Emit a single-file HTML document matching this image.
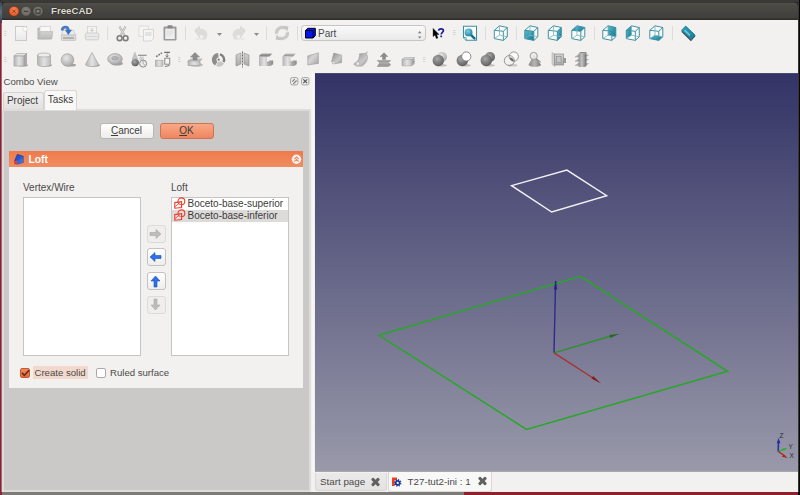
<!DOCTYPE html>
<html><head><meta charset="utf-8">
<style>
*{margin:0;padding:0;box-sizing:border-box}
html,body{width:800px;height:495px;overflow:hidden;background:#2a2a2a;font-family:"Liberation Sans",sans-serif;font-size:10px;color:#3c3c3c}
.abs{position:absolute}
#desk-l{left:0;top:0;width:2px;height:23px;background:linear-gradient(#343330 0,#343330 2px,#3a4a5e 3px,#5f6d7e 12px,#3d4c62 20px,#6b3040 23px)}
#desk-l2{left:0;top:23px;width:2px;height:472px;background:linear-gradient(90deg,#8a2035 0,#8a2035 1px,#a86a72 1px,#a86a72 2px)}
#desk-r{left:798px;top:0;width:2px;height:495px;background:linear-gradient(90deg,#5a5a58 0,#111 1px,#000 2px)}
#desk-b{left:0;top:492px;width:800px;height:3px;background:linear-gradient(90deg,#86233a 0,#86233a 2px,#7c7b78 2px,#7c7b78 464px,#8e1f2c 464px,#8e1f2c 798px,#000 798px)}
#desk-t{left:0;top:0;width:800px;height:2px;background:#3a3935}
#title{left:2px;top:2px;width:796px;height:18px;background:linear-gradient(#383733 0,#383733 1px,#504f4a 1.5px,#4b4a45 3px,#403f3b 16px,#2f2e2b 17px,#2f2e2b 18px);border-radius:5px 5px 0 0}
#title .t{position:absolute;left:49px;top:3px;font-weight:bold;font-size:9.7px;color:#dfdbd2;text-shadow:0 0 1px #111}
.wb{position:absolute;top:5px;width:11px;height:11px;border-radius:50%}
#win{left:2px;top:20px;width:796px;height:472px;background:#f2f1f0}
#view{left:315px;top:73px;width:483px;height:399px;background:linear-gradient(#4a4972 0,#4a4972 1px,#333366 1px,#9999aa 398px,#a9a8b0 398px)}

#dock{left:2px;top:72px;width:308px;height:420px;background:#f2f1f0}
.dbtn{width:9px;height:9px;border:1px solid #b5b4b2;border-radius:2px;background:#f4f4f3}
#pane{left:2px;top:108.5px;width:309px;height:383px;background:#cbc9c7;border:2px solid #dddcda;border-radius:2px}
.tab{font-size:10px;color:#3c3c3c;text-align:center;border:1px solid #d3d2d0;border-bottom:none;border-radius:3px 3px 0 0;background:linear-gradient(#f1f0ef,#e2e1df)}
#tabP{padding-top:1.5px;padding-right:2px}
.tab.sel{background:#f8f8f7;padding-top:3.5px;border-color:#d8d7d5}
#split{left:311px;top:73px;width:4px;height:419px;background:linear-gradient(90deg,#f2f1f0,#f8f8f7 60%,#ecebea)}
#btnCancel,#btnOK{top:123px;width:54px;height:15.5px;border-radius:3px;text-align:center;font-size:10px;line-height:14px}
#btnCancel{left:99.5px;border:1px solid #b9b8b6;background:linear-gradient(#fefefe,#eeedec);color:#3c3c3c}
#btnOK{left:159.5px;border:1px solid #cf7452;background:linear-gradient(#f8a886,#ef8660);color:#3c3c3c}
#tbhead{left:9px;top:150.5px;width:294px;height:16px;background:linear-gradient(#ef7a4a,#f08d62)}
#tbhead span{position:absolute;left:19.5px;top:3.3px;font-weight:bold;font-size:10.3px;color:#fff}
#tbody{left:9px;top:166.5px;width:294px;height:221.5px;background:#f2f1f0}
.lbl{font-size:10px;color:#4a4a4a}
.lbox{background:#fff;border:1px solid #c6c5c3}
.row{position:absolute;left:0;width:116px;height:12px;padding-left:15.5px;font-size:10px;line-height:12px;color:#3c3c3c}
.row.hl{background:#dddbd9}

.abtn{width:19px;height:18px;border:1px solid #c3c2c0;border-radius:3px;background:linear-gradient(#fefefe,#efeeed);padding:0 0 0 1px}
.abtn.dis{border-color:#dcdbd9;background:#efeeed}
.abtn svg{display:block;margin-top:0;margin-left:-1.5px}
#chk1{left:19.5px;top:368px;width:10px;height:9.5px;border-radius:2px;background:linear-gradient(#f08a5e,#e3683a);border:1px solid #c85a30}
#chk1 svg{position:absolute;left:-1px;top:-1px}
#chk1l{left:33px;top:366px;width:55px;height:12.5px;background:#f3d9cd;font-size:9.6px;line-height:14px;padding-left:1.5px;color:#4a4a4a}
#chk2{left:96px;top:368px;width:9.5px;height:9.5px;border-radius:2px;background:#fff;border:1px solid #aaa9a7}
#chk2l{left:110px;top:366px;font-size:9.6px;line-height:14px;color:#4a4a4a}
#tabbar{left:311px;top:472px;width:487px;height:20px;background:#f2f1f0}
.btab{border:1px solid #d9d8d6;border-top:none;border-radius:0 0 3px 3px;font-size:9.8px;color:#4a4a4a}
.btab span{position:absolute;top:3px}
.x{position:absolute;top:5px;width:9px;height:9px}
.x:before,.x:after{content:"";position:absolute;left:3px;top:-0.5px;width:3px;height:10px;background:#626262;border-radius:1px;transform:rotate(45deg)}
.x:after{transform:rotate(-45deg)}
</style></head>
<body>
<div class="abs" id="desk-t"></div>
<div class="abs" id="desk-l"></div><div class="abs" id="desk-l2"></div>
<div class="abs" id="desk-r"></div>
<div class="abs" id="desk-b"></div>
<div class="abs" id="title">
  <svg style="position:absolute;left:0;top:0" width="60" height="18" viewBox="0 0 60 18">
  <defs><radialGradient id="tbR" cx=".5" cy=".4" r=".6"><stop offset="0" stop-color="#f88a5c"/><stop offset=".7" stop-color="#e8602f"/><stop offset="1" stop-color="#c4481e"/></radialGradient>
  <radialGradient id="tbG" cx=".5" cy=".4" r=".6"><stop offset="0" stop-color="#86857f"/><stop offset=".7" stop-color="#6c6b66"/><stop offset="1" stop-color="#55544f"/></radialGradient></defs>
  <circle cx="12" cy="9.3" r="5.2" fill="url(#tbR)" stroke="#3a2a22" stroke-width=".6"/>
  <path d="M10.4 7.7l3.2 3.2M13.6 7.7l-3.2 3.2" stroke="#7a3418" stroke-width=".9"/>
  <circle cx="24" cy="9.3" r="5.2" fill="url(#tbG)" stroke="#383733" stroke-width=".6"/>
  <path d="M21.8 9.3h4.4" stroke="#3a3935" stroke-width="1.2"/>
  <circle cx="36" cy="9.3" r="5.2" fill="url(#tbG)" stroke="#383733" stroke-width=".6"/>
  <rect x="34" y="7.3" width="4" height="4" fill="none" stroke="#3a3935" stroke-width="1"/>
</svg>
  <div class="t">FreeCAD</div>
</div>
<div class="abs" id="win"></div>
<!--TOOLBAR--><svg class="abs" style="left:0;top:0" width="800" height="72" viewBox="0 0 800 72"><defs>
<linearGradient id="gW" x1="0" y1="0" x2="0" y2="1"><stop offset="0" stop-color="#fafafa"/><stop offset="1" stop-color="#e9e9e9"/></linearGradient>
<linearGradient id="gG" x1="0" y1="0" x2="0" y2="1"><stop offset="0" stop-color="#d2d2d2"/><stop offset="1" stop-color="#a9a9a9"/></linearGradient>
<linearGradient id="gGh" x1="0" y1="0" x2="1" y2="0"><stop offset="0" stop-color="#b4b4b4"/><stop offset=".5" stop-color="#e2e2e2"/><stop offset="1" stop-color="#bcbcbc"/></linearGradient>
<linearGradient id="gTop" x1="0" y1="0" x2="0" y2="1"><stop offset="0" stop-color="#a8a8a8"/><stop offset="1" stop-color="#6c6c6c"/></linearGradient>
<linearGradient id="gTopL" x1="0" y1="0" x2="0" y2="1"><stop offset="0" stop-color="#c4c4c4"/><stop offset="1" stop-color="#8a8a8a"/></linearGradient>
<linearGradient id="gG2" x1="0" y1="0" x2="1" y2="0"><stop offset="0" stop-color="#b8b8b8"/><stop offset="1" stop-color="#8a8a8a"/></linearGradient>
<linearGradient id="gRuled" x1="0" y1="0" x2="1" y2="1"><stop offset="0" stop-color="#9a9a9a"/><stop offset=".4" stop-color="#d6d6d6"/><stop offset="1" stop-color="#a4a4a4"/></linearGradient>
<linearGradient id="gLoft" x1="0" y1="0" x2="1" y2="1"><stop offset="0" stop-color="#8a8a8a"/><stop offset=".6" stop-color="#c8c8c8"/><stop offset="1" stop-color="#a0a0a0"/></linearGradient>
<linearGradient id="gOpen" x1="0" y1="0" x2="0" y2="1"><stop offset="0" stop-color="#d2d2d2"/><stop offset="1" stop-color="#bababa"/></linearGradient>
<linearGradient id="gMeas" x1="0" y1="0" x2="1" y2="1"><stop offset="0" stop-color="#2aa0c0"/><stop offset="1" stop-color="#1a7a94"/></linearGradient>
<linearGradient id="gSect" x1="0" y1="0" x2="1" y2="0"><stop offset="0" stop-color="#8a8a8a"/><stop offset=".5" stop-color="#b4b4b4"/><stop offset="1" stop-color="#7a7a7a"/></linearGradient>
<linearGradient id="gComp" x1="0" y1="0" x2="1" y2="0"><stop offset="0" stop-color="#8c8c8c"/><stop offset=".5" stop-color="#c2c2c2"/><stop offset="1" stop-color="#8a8a8a"/></linearGradient>
<linearGradient id="gT" x1="0" y1="0" x2="1" y2="1"><stop offset="0" stop-color="#58bcd4"/><stop offset="1" stop-color="#137a94"/></linearGradient>
<radialGradient id="gS" cx=".4" cy=".35" r=".7"><stop offset="0" stop-color="#e4e4e4"/><stop offset="1" stop-color="#9a9a9a"/></radialGradient>
<radialGradient id="gSd" cx=".4" cy=".35" r=".7"><stop offset="0" stop-color="#a8a8a8"/><stop offset="1" stop-color="#5a5a5a"/></radialGradient>
<radialGradient id="gSl" cx=".4" cy=".35" r=".7"><stop offset="0" stop-color="#e8e8e8"/><stop offset="1" stop-color="#a6a6a6"/></radialGradient>
<radialGradient id="gMag" cx=".4" cy=".35" r=".7"><stop offset="0" stop-color="#7fd0e6"/><stop offset="1" stop-color="#1a7fa0"/></radialGradient>
<radialGradient id="gR" cx=".5" cy=".5" r=".5"><stop offset="0" stop-color="#f78055"/><stop offset=".75" stop-color="#e55a2c"/><stop offset="1" stop-color="#b54420"/></radialGradient>
</defs><rect x="301.5" y="25.5" width="124" height="15" rx="3" fill="url(#gW)" stroke="#c6c5c3"/>
<g transform="translate(304.5,27)"><path d="M1 3.5L3.2 1.3H10.8V8.7L8.6 11H1z" fill="#0014f0" stroke="#000" stroke-width="1"/><path d="M1.2 3.5H8.6V11" fill="none" stroke="#000" stroke-width=".8"/></g>
<text x="318" y="36.6" font-family="Liberation Sans" font-size="10" fill="#4a4a4a">Part</text>
<path d="M418 33.2h3.4l-1.7-2.2zM418 36.4h3.4l-1.7 2.2z" fill="#777"/><g transform="translate(4,31)" stroke="#d6d5d3" stroke-width="1"><path d="M0 0.5h2.5M0 2.5h2.5M0 4.5h2.5"/></g><g transform="translate(13,25)"><rect x="2.5" y="1.5" width="11" height="14" fill="url(#gW)" stroke="#c9c9c9"/><circle cx="12" cy="4" r="2.2" fill="#fff" stroke="#d6d6d6" stroke-width=".8"/></g><g transform="translate(37,25)"><path d="M0.8 3h3l.8 .8h8.4v10.3H0.8z" fill="#c2c2c2" stroke="#b0b0b0" stroke-width=".6"/><rect x="3" y="1.3" width="10.6" height="8" fill="#f7f7f7" stroke="#c6c6c6" stroke-width=".6"/><path d="M3.5 6.6H15.8L14.8 14H1.2z" fill="url(#gOpen)" stroke="#b2b2b2" stroke-width=".6"/></g><g transform="translate(60,25)"><path d="M2.9 5.3h10.5l2.4 4.8H1.4z" fill="#ececec" stroke="#bdbdbd" stroke-width=".6"/><rect x="1.4" y="10.1" width="14.4" height="5.3" rx=".8" fill="#dcdcdc" stroke="#b4b4b4" stroke-width=".6"/><rect x="3" y="12.2" width="11" height="1.6" fill="#a9a9a9"/><path d="M2.2 5.4C2.2 1.8 7.8 0.4 8.4 5.4" fill="none" stroke="#4a7cc4" stroke-width="2.8"/><path d="M4.9 4.7H12L8.3 10.1z" fill="#3d70be"/></g><g transform="translate(84,25)"><rect x="3.5" y="1.5" width="9" height="7" fill="#f2f2f2" stroke="#d2d2d2" stroke-width=".8"/><path d="M8 3v3M6.5 5l1.5 1.5 1.5-1.5" stroke="#c4c4c4" fill="none"/><rect x="1.3" y="8" width="13.5" height="6.8" rx="1.5" fill="#e9e9e9" stroke="#c8c8c8" stroke-width=".8"/><path d="M2.5 11.5h11" stroke="#d4d4d4"/></g><path d="M107.5 26V40.5" stroke="#dddcda" stroke-width="1"/><g transform="translate(115,25)"><path d="M4.5 1.5L9.8 11M10.5 1.5L5.2 11" stroke="#a9a9a9" stroke-width="2"/><path d="M4.5 1.5L9.8 11M10.5 1.5L5.2 11" stroke="#e4e4e4" stroke-width=".9"/><circle cx="4.6" cy="13.2" r="2.4" fill="none" stroke="#7e7e7e" stroke-width="1.6"/><circle cx="10.6" cy="13.2" r="2.4" fill="none" stroke="#7e7e7e" stroke-width="1.6"/></g><g transform="translate(138,25)"><rect x="1" y="1" width="9.5" height="10.5" fill="#f4f4f4" stroke="#dcdcdc" stroke-width=".9"/><path d="M5.5 4.5h10v9l-2.5 2.5h-7.5z" fill="#f5f5f5" stroke="#d2d2d2" stroke-width=".9"/><rect x="7" y="7" width="6.5" height="4" fill="#e2e2e2"/></g><g transform="translate(162,25)"><rect x="1.5" y="1.5" width="13" height="14" rx="1" fill="#9b9b9b"/><rect x="3.2" y="3.6" width="9.6" height="10.4" fill="#eeeeee"/><path d="M4.5 6h7M4.5 8h7M4.5 10h5" stroke="#d6d6d6" stroke-width=".8"/><rect x="5.5" y="0.3" width="5" height="3" rx=".8" fill="#858585"/></g><path d="M185.5 26V40.5" stroke="#dddcda" stroke-width="1"/><g transform="translate(193,25)"><ellipse cx="8" cy="13.8" rx="6" ry="1.5" fill="#e9e8e7"/><path d="M1.5 5.5L6.5 1v3c4.5 0 7.5 2 7.5 5.8 0 2.6-1.8 4-3.8 4.5 1.3-1.3 1.7-4.5-3.7-4.8v3.2z" fill="#dcdcdc" stroke="#d2d2d2" stroke-width=".5"/></g><path d="M217 33h5l-2.5 3z" fill="#8c8c8c"/><g transform="translate(231,25)"><g transform="translate(16,0) scale(-1,1)"><ellipse cx="8" cy="13.8" rx="6" ry="1.5" fill="#e9e8e7"/><path d="M1.5 5.5L6.5 1v3c4.5 0 7.5 2 7.5 5.8 0 2.6-1.8 4-3.8 4.5 1.3-1.3 1.7-4.5-3.7-4.8v3.2z" fill="#dcdcdc" stroke="#d2d2d2" stroke-width=".5"/></g></g><path d="M254 33h5l-2.5 3z" fill="#8c8c8c"/><path d="M266.5 26V40.5" stroke="#dddcda" stroke-width="1"/><g transform="translate(274,25)"><path d="M2.6 8.8A5.4 5.4 0 0 1 11.2 3.6" fill="none" stroke="#c9c9c9" stroke-width="3.2"/><path d="M9.2 0.8l5.2 .6-1.2 5.4z" fill="#c4c4c4"/><path d="M13.4 7.2A5.4 5.4 0 0 1 4.8 12.4" fill="none" stroke="#c9c9c9" stroke-width="3.2"/><path d="M6.8 15.2l-5.2-.6 1.2-5.4z" fill="#c4c4c4"/></g><path d="M297.5 26V40.5" stroke="#dddcda" stroke-width="1"/><g transform="translate(431,27)"><path d="M2.1 1.4V9.6L4 7.9 5.4 11.6 6.9 11 5.6 7.4H8z" fill="#000" stroke="#000" stroke-width=".4" stroke-linejoin="round"/><path d="M7.6 3.6C7.8 1.4 12.4 1.2 12.4 3.6 12.4 5.4 10.2 5.4 10.2 7.6" fill="none" stroke="#1c1c9c" stroke-width="1.7"/><rect x="9.3" y="8.6" width="1.8" height="1.6" fill="#1c1c9c"/></g><g transform="translate(453,30)" stroke="#d6d5d3" stroke-width="1"><path d="M0 0.5h2.5M0 2.5h2.5M0 4.5h2.5"/></g><g transform="translate(462,25)"><path d="M1.5 1.2h13v14.1h-10.3l-2.7-2.7z" fill="#fdfefe" stroke="#3f8f9b" stroke-width="1.1"/><path d="M1.5 12.6h2.7v2.7" fill="#e6f0f2" stroke="#3f8f9b" stroke-width=".8"/><path d="M9.2 10.2l3.2 3.2" stroke="#167186" stroke-width="2.6" stroke-linecap="round"/><circle cx="6.6" cy="7.4" r="3.9" fill="url(#gMag)"/></g><path d="M485.5 26V40.5" stroke="#dddcda" stroke-width="1"/><g transform="translate(493.3,25)"><path d="M1 5.3 L10 6.3 L10 15.4 L1 13.6Z" fill="#fbfdfd"/><path d="M1 5.3 L6.2 0.8 L14 2.5 L10 6.3Z" fill="#f6fafb"/><path d="M10 6.3 L14 2.5 L14 11.8 L10 15.4Z" fill="#f3f8f9"/><path d="M1 5.3L10 6.3M10 6.3L10 15.4M10 15.4L1 13.6M1 13.6L1 5.3M6.2 0.8L14 2.5M14 2.5L14 11.8M1 5.3L6.2 0.8M10 6.3L14 2.5M10 15.4L14 11.8" stroke="#3a8c99" stroke-width=".95" fill="none" stroke-linejoin="round"/><path d="M14 11.8L6.2 10.2M6.2 10.2L6.2 0.8M1 13.6L6.2 10.2" stroke="#7ab4bd" stroke-width=".8" fill="none"/></g><path d="M516.5 26V40.5" stroke="#dddcda" stroke-width="1"/><g transform="translate(523.8,25)"><path d="M1 5.3 L10 6.3 L10 15.4 L1 13.6Z" fill="#fbfdfd"/><path d="M1 5.3 L6.2 0.8 L14 2.5 L10 6.3Z" fill="#f6fafb"/><path d="M10 6.3 L14 2.5 L14 11.8 L10 15.4Z" fill="#f3f8f9"/><path d="M1 5.3 L10 6.3 L10 15.4 L1 13.6Z" fill="url(#gT)"/><path d="M1 5.3L10 6.3M10 6.3L10 15.4M10 15.4L1 13.6M1 13.6L1 5.3M6.2 0.8L14 2.5M14 2.5L14 11.8M1 5.3L6.2 0.8M10 6.3L14 2.5M10 15.4L14 11.8" stroke="#3a8c99" stroke-width=".95" fill="none" stroke-linejoin="round"/><path d="M14 11.8L6.2 10.2M6.2 10.2L6.2 0.8M1 13.6L6.2 10.2" stroke="#7ab4bd" stroke-width=".8" fill="none"/></g><g transform="translate(547.3,25)"><path d="M1 5.3 L10 6.3 L10 15.4 L1 13.6Z" fill="#fbfdfd"/><path d="M1 5.3 L6.2 0.8 L14 2.5 L10 6.3Z" fill="#f6fafb"/><path d="M10 6.3 L14 2.5 L14 11.8 L10 15.4Z" fill="#f3f8f9"/><path d="M10 6.3 L14 2.5 L14 11.8 L10 15.4Z" fill="url(#gT)"/><path d="M1 5.3L10 6.3M10 6.3L10 15.4M10 15.4L1 13.6M1 13.6L1 5.3M6.2 0.8L14 2.5M14 2.5L14 11.8M1 5.3L6.2 0.8M10 6.3L14 2.5M10 15.4L14 11.8" stroke="#3a8c99" stroke-width=".95" fill="none" stroke-linejoin="round"/><path d="M14 11.8L6.2 10.2M6.2 10.2L6.2 0.8M1 13.6L6.2 10.2" stroke="#7ab4bd" stroke-width=".8" fill="none"/></g><g transform="translate(570.8,25)"><path d="M1 5.3 L10 6.3 L10 15.4 L1 13.6Z" fill="#fbfdfd"/><path d="M1 5.3 L6.2 0.8 L14 2.5 L10 6.3Z" fill="#f6fafb"/><path d="M10 6.3 L14 2.5 L14 11.8 L10 15.4Z" fill="#f3f8f9"/><path d="M1 5.3 L6.2 0.8 L14 2.5 L10 6.3Z" fill="url(#gT)"/><path d="M1 5.3L10 6.3M10 6.3L10 15.4M10 15.4L1 13.6M1 13.6L1 5.3M6.2 0.8L14 2.5M14 2.5L14 11.8M1 5.3L6.2 0.8M10 6.3L14 2.5M10 15.4L14 11.8" stroke="#3a8c99" stroke-width=".95" fill="none" stroke-linejoin="round"/><path d="M14 11.8L6.2 10.2M6.2 10.2L6.2 0.8M1 13.6L6.2 10.2" stroke="#7ab4bd" stroke-width=".8" fill="none"/></g><path d="M594.5 26V40.5" stroke="#dddcda" stroke-width="1"/><g transform="translate(601.8,25)"><path d="M1 5.3 L10 6.3 L10 15.4 L1 13.6Z" fill="#fbfdfd"/><path d="M1 5.3 L6.2 0.8 L14 2.5 L10 6.3Z" fill="#f6fafb"/><path d="M10 6.3 L14 2.5 L14 11.8 L10 15.4Z" fill="#f3f8f9"/><path d="M6.2 0.8 L14 2.5 L14 11.8 L6.2 10.2Z" fill="url(#gT)"/><path d="M1 5.3L10 6.3M10 6.3L10 15.4M10 15.4L1 13.6M1 13.6L1 5.3M6.2 0.8L14 2.5M14 2.5L14 11.8M1 5.3L6.2 0.8M10 6.3L14 2.5M10 15.4L14 11.8" stroke="#3a8c99" stroke-width=".95" fill="none" stroke-linejoin="round"/><path d="M14 11.8L6.2 10.2M6.2 10.2L6.2 0.8M1 13.6L6.2 10.2" stroke="#7ab4bd" stroke-width=".8" fill="none"/></g><g transform="translate(625.3,25)"><path d="M1 5.3 L10 6.3 L10 15.4 L1 13.6Z" fill="#fbfdfd"/><path d="M1 5.3 L6.2 0.8 L14 2.5 L10 6.3Z" fill="#f6fafb"/><path d="M10 6.3 L14 2.5 L14 11.8 L10 15.4Z" fill="#f3f8f9"/><path d="M1 5.3 L6.2 0.8 L6.2 10.2 L1 13.6Z" fill="url(#gT)"/><path d="M1 5.3L10 6.3M10 6.3L10 15.4M10 15.4L1 13.6M1 13.6L1 5.3M6.2 0.8L14 2.5M14 2.5L14 11.8M1 5.3L6.2 0.8M10 6.3L14 2.5M10 15.4L14 11.8" stroke="#3a8c99" stroke-width=".95" fill="none" stroke-linejoin="round"/><path d="M14 11.8L6.2 10.2M6.2 10.2L6.2 0.8M1 13.6L6.2 10.2" stroke="#7ab4bd" stroke-width=".8" fill="none"/></g><g transform="translate(648.8,25)"><path d="M1 5.3 L10 6.3 L10 15.4 L1 13.6Z" fill="#fbfdfd"/><path d="M1 5.3 L6.2 0.8 L14 2.5 L10 6.3Z" fill="#f6fafb"/><path d="M10 6.3 L14 2.5 L14 11.8 L10 15.4Z" fill="#f3f8f9"/><path d="M1 13.6 L6.2 10.2 L14 11.8 L10 15.4Z" fill="url(#gT)"/><path d="M1 5.3L10 6.3M10 6.3L10 15.4M10 15.4L1 13.6M1 13.6L1 5.3M6.2 0.8L14 2.5M14 2.5L14 11.8M1 5.3L6.2 0.8M10 6.3L14 2.5M10 15.4L14 11.8" stroke="#3a8c99" stroke-width=".95" fill="none" stroke-linejoin="round"/><path d="M14 11.8L6.2 10.2M6.2 10.2L6.2 0.8M1 13.6L6.2 10.2" stroke="#7ab4bd" stroke-width=".8" fill="none"/></g><path d="M672.5 26V40.5" stroke="#dddcda" stroke-width="1"/><g transform="translate(680.5,25)"><path d="M1.1 5.3L10.5 14.6V16.2L1.1 7z" fill="#3a3e40"/><path d="M1.1 5.3L5.2 1 14.6 10.1 10.5 14.6z" fill="url(#gMeas)" stroke="#116a80" stroke-width=".7"/><path d="M4 5l5.5 5.3" stroke="#8fe0f5" stroke-width="1.6" opacity=".7"/><path d="M10.5 14.6L14.6 10.1V11.6L10.5 16.2z" fill="#1a5664"/></g><g transform="translate(4,57)" stroke="#d6d5d3" stroke-width="1"><path d="M0 0.5h2.5M0 2.5h2.5M0 4.5h2.5"/></g><g transform="translate(12,51)"><ellipse cx="11" cy="14.2" rx="5" ry="1.3" fill="#8e8e8e" opacity=".8"/><path d="M2 5l3-2.5h9.5L12 5z" fill="#e6e6e6" stroke="#a8a8a8" stroke-width=".7"/><path d="M12 5l2.5-2.5v10L12 15z" fill="#a9a9a9" stroke="#9a9a9a" stroke-width=".7"/><rect x="2" y="5" width="10" height="10" fill="url(#gGh)" stroke="#a4a4a4" stroke-width=".7"/></g><g transform="translate(36,51)"><ellipse cx="11" cy="14.2" rx="5" ry="1.3" fill="#8e8e8e" opacity=".8"/><path d="M1.5 4v9.5a6.5 2 0 0 0 13 0V4z" fill="url(#gGh)" stroke="#a4a4a4" stroke-width=".7"/><ellipse cx="8" cy="4" rx="6.5" ry="2" fill="#ececec" stroke="#a8a8a8" stroke-width=".7"/></g><g transform="translate(60,51)"><ellipse cx="11" cy="14" rx="5" ry="1.5" fill="#8e8e8e" opacity=".8"/><circle cx="7.5" cy="9" r="6.3" fill="url(#gSl)" stroke="#a2a2a2" stroke-width=".7"/></g><g transform="translate(84,51)"><ellipse cx="11" cy="14.3" rx="5" ry="1.4" fill="#8e8e8e" opacity=".8"/><path d="M8 1.5L1.5 13.5a6.5 2 0 0 0 13 0z" fill="url(#gGh)" stroke="#a4a4a4" stroke-width=".7"/></g><g transform="translate(107,51)"><ellipse cx="10" cy="12.5" rx="6" ry="2" fill="#8e8e8e" opacity=".8"/><ellipse cx="8" cy="8" rx="7.3" ry="5.4" fill="url(#gSl)" stroke="#9e9e9e" stroke-width=".7"/><ellipse cx="8" cy="7.2" rx="3.3" ry="1.8" fill="#b3b3b3" stroke="#999" stroke-width=".6"/></g><g transform="translate(131,51)"><path d="M3.9 1.2L1.2 8.2h5.4z" fill="#c4c4c4" stroke="#adadad" stroke-width=".5"/><path d="M7 4.3H15.7" stroke="#8f8f8f" stroke-width="1.2"/><rect x="8.3" y="5.6" width="4.5" height="3.4" fill="#cfcfcf"/><circle cx="4.2" cy="11.6" r="3.7" fill="url(#gSd)"/><circle cx="12.1" cy="12.6" r="3.5" fill="#ededed" stroke="#8a8a8a" stroke-width="1"/><path d="M12.1 9.8v2.8l2 1.8" stroke="#9a9a9a" fill="none" stroke-width=".8"/></g><g transform="translate(154.5,51)"><rect x="0.8" y="9.2" width="7.7" height="6" fill="url(#gGh)" stroke="#a8a8a8" stroke-width=".6"/><path d="M1.7 5.6L7.4 1.9" stroke="#6a6a6a" stroke-width="1.6" stroke-dasharray="1.6 1.1"/><path d="M9.7 1.4H15.5" stroke="#6f6f6f" stroke-width="1.3"/><path d="M12.6 2.5v3.2M11.2 4.6l1.4 1.5 1.4-1.5" stroke="#7a7a7a" fill="none" stroke-width="1"/><rect x="10.3" y="7.2" width="4.9" height="6" fill="#f6f6f6" stroke="#8a8a8a" stroke-width="1"/><path d="M10.5 15.6l4.5-1.2" stroke="#7a7a7a" stroke-width="1"/></g><g transform="translate(178,57)" stroke="#d6d5d3" stroke-width="1"><path d="M0 0.5h2.5M0 2.5h2.5M0 4.5h2.5"/></g><g transform="translate(187,51)"><ellipse cx="9" cy="13.8" rx="7" ry="2" fill="#9a9a9a" opacity=".6"/><path d="M1 10l3-2h11l-2 2z" fill="#d0d0d0" stroke="#9e9e9e" stroke-width=".6"/><rect x="1" y="10" width="12" height="4.5" fill="url(#gGh)" stroke="#9e9e9e" stroke-width=".6"/><path d="M8 1.5L3.5 6h2.5v3h4V6h2.5z" fill="#8e8e8e" stroke="#7a7a7a" stroke-width=".5"/></g><g transform="translate(211,51)"><path d="M7.7 8.7L4.10 14.47A6.8 6.8 0 0 1 7.11 1.93Z" fill="#8c8c8c"/><path d="M7.7 8.7L13.27 12.60A6.8 6.8 0 0 1 5.15 15.00Z" fill="#c6c6c6"/><path d="M8.64 4.61L9.18 2.27A6.6 6.6 0 0 1 13.68 11.49L11.51 10.47A4.2 4.2 0 0 0 8.64 4.61Z" fill="#7e7e7e"/><circle cx="7.7" cy="8.7" r="2.3" fill="#f2f1f0"/><circle cx="7.7" cy="8.7" r="1.1" fill="#777"/></g><g transform="translate(234.5,51)"><path d="M1.5 4l5-2v11l-5 2z" fill="url(#gG)" stroke="#8c8c8c" stroke-width=".6"/><path d="M9.5 2l5 2v11l-5-2z" fill="url(#gG)" stroke="#8c8c8c" stroke-width=".6"/><path d="M8 0.5v16" stroke="#666" stroke-width="1" stroke-dasharray="2 1"/></g><g transform="translate(258,51)"><path d="M1 5.5C1.5 3.5 3 2.5 5 2.5H14.5L11.5 5.5H9.5C9 5.5 9 5.5 9 6.5" fill="url(#gTop)"/><path d="M1 5.5H9V9.5C9 10.5 10 11 11 11V15H1z" fill="url(#gGh)"/><path d="M9 11.5L11.5 9.5H15.2V13.2L12.5 15H9z" fill="url(#gG2)"/><path d="M9 11.5H12.5V15" fill="none" stroke="#9a9a9a" stroke-width=".5"/></g><g transform="translate(281.5,51)"><path d="M1 5.5L4 2.5H14.5L11.5 5.5z" fill="url(#gTopL)"/><path d="M1 5.5H9V9L11 11V15H1z" fill="url(#gGh)"/><path d="M9 11.5L11.5 9.5H15.2V13.2L12.5 15H9z" fill="url(#gG2)"/><path d="M9 11.5H12.5V15" fill="none" stroke="#a4a4a4" stroke-width=".5"/></g><g transform="translate(306.5,51)"><path d="M1.3 4.9L11.9 1.8V12.4L1.3 14z" fill="url(#gRuled)" stroke="#8f8f8f" stroke-width=".5"/></g><g transform="translate(330,51)"><path d="M3.75 2.1L11.6 4V11.8L3 13 1.6 10.25z" fill="url(#gLoft)" stroke="#8a8a8a" stroke-width=".4"/><rect x="2.2" y="10.3" width="2.3" height="2.4" fill="#f4f4f4" stroke="#9a9a9a" stroke-width=".4"/></g><g transform="translate(352.5,51)"><path d="M7 2.8L13.8 2.2C15 4 15.3 6.5 14.8 8.5C13.8 11.5 11.5 14.5 9 15.2H4L1 13.2L4.5 10.5C6.5 8.5 7.2 5.5 7 2.8z" fill="url(#gLoft)" stroke="#8e8e8e" stroke-width=".4"/><path d="M13.8 2.2L15 0.6" stroke="#888" stroke-width=".8"/><path d="M3.5 11.5l2.8-.8.8 3-2.8.8z" fill="#eee" stroke="#999" stroke-width=".4"/></g><g transform="translate(376,51)"><path d="M8 1.8L4.2 5.5h2.3v3h3v-3h2.3z" fill="#8a8a8a" stroke="#777" stroke-width=".4"/><path d="M1.2 9.5h13.5l-2 2H3.2z" fill="#a0a0a0" stroke="#8a8a8a" stroke-width=".5"/><path d="M3.2 12.5h10.5l1 1.5-2.5 1.5H1.2z" fill="#9c9c9c" stroke="#8a8a8a" stroke-width=".5"/></g><g transform="translate(400,51)"><path d="M2 8.3l2.5-1.8h10l-2.5 1.8z" fill="#dcdcdc" stroke="#a0a0a0" stroke-width=".5"/><path d="M2 8.3h10v6.5H2z" fill="url(#gGh)" stroke="#9a9a9a" stroke-width=".5"/><path d="M12 8.3l2.5-1.8v6.5L12 14.8z" fill="#a6a6a6"/><path d="M12.5 11.5l2.7-1" stroke="#999" stroke-width=".8"/></g><g transform="translate(423,57)" stroke="#d6d5d3" stroke-width="1"><path d="M0 0.5h2.5M0 2.5h2.5M0 4.5h2.5"/></g><g transform="translate(432,51)"><circle cx="10" cy="6" r="5" fill="url(#gSl)"/><ellipse cx="9" cy="14.3" rx="6" ry="1.3" fill="#bdbdbd"/><circle cx="6.3" cy="9.5" r="5.7" fill="url(#gSd)"/></g><g transform="translate(456,51)"><ellipse cx="9" cy="14.3" rx="6" ry="1.3" fill="#bdbdbd"/><circle cx="6.3" cy="9.5" r="5.7" fill="url(#gSd)"/><circle cx="10.3" cy="5.5" r="4.6" fill="#fff" stroke="#7a7a7a" stroke-width=".9"/></g><g transform="translate(480,51)"><ellipse cx="9" cy="14.3" rx="6" ry="1.3" fill="#bdbdbd"/><circle cx="10" cy="6" r="5" fill="url(#gSd)"/><circle cx="6.3" cy="9.5" r="5.7" fill="url(#gSd)"/></g><g transform="translate(503.5,51)"><ellipse cx="9" cy="14.3" rx="5" ry="1.2" fill="#c8c8c8"/><circle cx="10.3" cy="5.5" r="4.6" fill="#fafafa" stroke="#8a8a8a" stroke-width=".9"/><circle cx="5.8" cy="9.6" r="5" fill="none" stroke="#8a8a8a" stroke-width=".9"/><path d="M6.2 6.3a4.6 4.6 0 0 0 4.3 4.2 5 5 0 0 0-4.3-4.2z" fill="#6a6a6a"/></g><g transform="translate(527.5,51)"><path d="M6.5 3.5L1 13.8a6 1.8 0 0 0 12.5 0z" fill="url(#gSect)"/><circle cx="6.2" cy="5" r="3.6" fill="#ececec" fill-opacity=".8" stroke="#9a9a9a" stroke-width="1"/><path d="M8.8 7.6l4.2 3.6" stroke="#8a8a8a" stroke-width="1.1"/></g><g transform="translate(550.5,51)"><path d="M1.5 1.5l3 2v12l-3-2z" fill="#cfcfcf" stroke="#aaa" stroke-width=".5"/><rect x="4" y="3" width="9" height="11" fill="url(#gG)" stroke="#8a8a8a" stroke-width=".7"/><rect x="6" y="5.5" width="4.5" height="6" fill="#c6c6c6" stroke="#8a8a8a" stroke-width=".6"/><path d="M13 7h2.5v5H13" fill="#999"/></g><g transform="translate(574,51)"><path d="M1 6l3-2h10.5l-3 2z" fill="#b0b0b0" stroke="#929292" stroke-width=".4"/><path d="M1 10.3l3-2h10.5l-3 2z" fill="#b0b0b0" stroke="#929292" stroke-width=".4"/><path d="M1 14.6l3-2h10.5l-3 2z" fill="#b0b0b0" stroke="#929292" stroke-width=".4"/><rect x="4.5" y="2.5" width="6.5" height="13.5" fill="url(#gComp)" opacity=".92"/><path d="M4.5 2.5l2-1.5h6l-1.5 1.5z" fill="#8a8a8a"/><path d="M11 2.5l1.5-1.5v13.5L11 16z" fill="#7e7e7e"/></g></svg><!--/TOOLBAR-->

<div class="abs" id="dock">
  <div class="abs" style="left:1.5px;top:3.5px;font-size:9.6px;color:#4c4c4c">Combo View</div>
  <svg class="abs" style="left:286px;top:3px" width="26" height="14" viewBox="0 0 26 14">
    <rect x="2.6" y="2.6" width="7.3" height="7.3" rx="1.6" fill="#efefee" stroke="#a3a3a3" stroke-width="1"/>
    <path d="M4.3 6.6l2.4-2.4M5.3 8.8l3.3-3.3" stroke="#7a7a7a" stroke-width="1.1"/>
    <rect x="13.6" y="2.6" width="7.3" height="7.3" rx="1.6" fill="#efefee" stroke="#a3a3a3" stroke-width="1"/>
    <path d="M15.3 4.3l3.9 3.9M19.2 4.3l-3.9 3.9" stroke="#555" stroke-width="1.2"/>
  </svg>
</div>
<div class="abs" id="pane"></div>
<div class="abs tab" id="tabP" style="left:3px;top:92px;width:41px;height:17px;">Project</div>
<div class="abs tab sel" id="tabT" style="left:44px;top:89.5px;width:33px;height:20px;">Tasks</div>
<div class="abs" id="split"></div>
<div class="abs" id="btnCancel"><span><u>C</u>ancel</span></div>
<div class="abs" id="btnOK"><span><u>O</u>K</span></div>
<div class="abs" id="tbhead"><svg class="abs" style="left:4px;top:2px" width="12" height="12" viewBox="0 0 12 12"><defs><linearGradient id="lfG" x1="0" y1="0" x2="1" y2="1"><stop offset="0" stop-color="#1b3fb8"/><stop offset=".5" stop-color="#2a56d0"/><stop offset="1" stop-color="#5a9ae8"/></linearGradient></defs><path d="M4.3 1.3L10.3 3.3V9.5L3.9 11.3 1.7 7.4z" fill="url(#lfG)" stroke="#1a2f8a" stroke-width=".5"/><path d="M3.9 11.3V7.5" stroke="#7fb0f0" stroke-width=".6"/><rect x="1.2" y="8" width="2.8" height="3.3" fill="#e83a20"/></svg><span>Loft</span>
  <svg class="abs" style="left:281.5px;top:3.5px" width="11" height="11" viewBox="0 0 11 11"><circle cx="5.5" cy="5.2" r="4.7" fill="#f6f2f0"/><path d="M3.2 5.2L5.5 3l2.3 2.2M3.2 7.6L5.5 5.4l2.3 2.2" fill="none" stroke="#ef8a60" stroke-width="1.1"/></svg></div>
<div class="abs" id="tbody">
  <div class="abs lbl" style="left:14px;top:15px">Vertex/Wire</div>
  <div class="abs lbl" style="left:162px;top:15px">Loft</div>
  <div class="abs lbox" style="left:14px;top:30px;width:118px;height:159px"></div>
  <div class="abs lbox" style="left:162px;top:30px;width:118px;height:159px">
    <div class="row" style="top:0px"><svg class="abs" style="left:1px;top:-1px" width="13" height="12" viewBox="0 0 13 12"><circle cx="8.4" cy="4.3" r="3.4" fill="none" stroke="#f23a28" stroke-width="1.1"/><path d="M1.8 5.6L8.6 4.6V10.6L1.8 11.2z" fill="#fff" fill-opacity=".3" stroke="#f23a28" stroke-width="1.1"/><path d="M2.2 9.5l4.6-3.8" stroke="#e83424" stroke-width=".8"/></svg>Boceto-base-superior</div>
    <div class="row hl" style="top:12px"><svg class="abs" style="left:1px;top:-1px" width="13" height="12" viewBox="0 0 13 12"><circle cx="8.4" cy="4.3" r="3.4" fill="none" stroke="#f23a28" stroke-width="1.1"/><path d="M1.8 5.6L8.6 4.6V10.6L1.8 11.2z" fill="#fff" fill-opacity=".3" stroke="#f23a28" stroke-width="1.1"/><path d="M2.2 9.5l4.6-3.8" stroke="#e83424" stroke-width=".8"/></svg>Boceto-base-inferior</div>
  </div>
</div>

<div class="abs" id="view"></div>

<div class="abs abtn dis" style="left:146.5px;top:224.5px"><svg width="17" height="16" viewBox="0 0 17 16"><path d="M3 6.5h6v-3l5 4.5-5 4.5v-3H3z" fill="#bdbcbb" stroke="#a9a8a6" stroke-width=".6"/></svg></div>
<div class="abs abtn" style="left:146.5px;top:248px"><svg width="17" height="16" viewBox="0 0 17 16"><path d="M14 6.5H8v-3L3 8l5 4.5v-3h6z" fill="#2f6fe8" stroke="#1d4fb8" stroke-width=".6"/></svg></div>
<div class="abs abtn" style="left:146.5px;top:272px"><svg width="17" height="16" viewBox="0 0 17 16"><path d="M7 14V8H4l4.5-5 4.5 5h-3v6z" fill="#2f6fe8" stroke="#1d4fb8" stroke-width=".6"/></svg></div>
<div class="abs abtn dis" style="left:146.5px;top:295.5px"><svg width="17" height="16" viewBox="0 0 17 16"><path d="M7 2v6H4l4.5 5 4.5-5h-3V2z" fill="#bdbcbb" stroke="#a9a8a6" stroke-width=".6"/></svg></div>
<div class="abs" id="chk1"><svg width="10" height="10" viewBox="0 0 10 10"><path d="M2 4.8l2.3 2.6L9 2.2" fill="none" stroke="#5a2a1a" stroke-width="1.5"/></svg></div>
<div class="abs" id="chk1l">Create solid</div>
<div class="abs" id="chk2"></div>
<div class="abs" id="chk2l">Ruled surface</div>

<svg class="abs" style="left:0;top:0" width="800" height="495" viewBox="0 0 800 495">
 <defs><clipPath id="vc"><rect x="315" y="73" width="483" height="398"/></clipPath></defs>
 <g clip-path="url(#vc)" fill="none" stroke-linejoin="miter">
  <path d="M511.6 185.7L566.9 170.1L606.7 195.7L551.7 212Z" stroke="#f2f2f4" stroke-width="1.4"/>
  <path d="M379 335.3L580.4 276.4L727.6 371.3L526.5 429.5Z" stroke="#27a727" stroke-width="1.5"/>
  <path d="M554 352.8L555.6 281" stroke="#2b2b92" stroke-width="1.4"/>
  <path d="M555.7 280l-1.7 9.6h3.2z" fill="#25257a" stroke="none"/>
  <path d="M554 352.8L611 336" stroke="#2c922c" stroke-width="1.4"/>
  <path d="M619.5 333.8l-10.2 1.2 1.1 2.9z" fill="#1f6a1f" stroke="none"/>
  <path d="M554 352.8L593 378" stroke="#a83232" stroke-width="1.4"/>
  <path d="M601 383.6l-9.6-5 1.8-2.7z" fill="#7e2020" stroke="none"/>
  <path d="M778.2 451.4L778.5 441" stroke="#2a2ab0" stroke-width="1.6"/>
  <path d="M778.6 437.8l-1.8 5.5h3.6z" fill="#2a2ab0" stroke="none"/>
  <path d="M778.2 451.4L785 448.9" stroke="#26b226" stroke-width="1.4"/>
  <path d="M787.6 448.2l-4.8 0.2 1 2.4z" fill="#26b226" stroke="none"/>
  <path d="M778.2 451.4L785 456" stroke="#b22a2a" stroke-width="1.4"/>
  <path d="M788 458l-4.6-3.6-1.4 2.4z" fill="#a52222" stroke="none"/>
 </g>
 <g font-family="Liberation Sans" font-size="6.5" fill="#2a2a2a">
  <text x="779.6" y="437.8">Z</text>
  <text x="788.6" y="449">Y</text>
  <text x="789.6" y="458">X</text>
 </g>
</svg>
<div class="abs" id="tabbar"></div>
<div class="abs btab" style="left:314.5px;top:472.5px;width:72.5px;height:18px;background:linear-gradient(#ebeae9,#e4e3e1)"><span style="left:4.5px">Start page</span><i class="x" style="left:55.5px"></i></div>
<div class="abs btab sel" style="left:388px;top:471.5px;width:104px;height:20.5px;background:#f8f8f7"><svg class="abs" style="left:3px;top:5px" width="12" height="11" viewBox="0 0 12 11"><path d="M0 0.6H5V3H2.6V9H0z" fill="#f0401a"/><g transform="translate(5.7,5.9)"><path d="M2.80 0.00L3.86 0.55L3.60 1.49L2.41 1.43L1.98 1.98L2.34 3.12L1.49 3.60L0.70 2.71L0.00 2.80L-0.55 3.86L-1.49 3.60L-1.43 2.41L-1.98 1.98L-3.12 2.34L-3.60 1.49L-2.71 0.70L-2.80 0.00L-3.86 -0.55L-3.60 -1.49L-2.41 -1.43L-1.98 -1.98L-2.34 -3.12L-1.49 -3.60L-0.70 -2.71L-0.00 -2.80L0.55 -3.86L1.49 -3.60L1.43 -2.41L1.98 -1.98L3.12 -2.34L3.60 -1.49L2.71 -0.70Z" fill="#1a3a9e"/><circle r="1.1" fill="#fff"/></g></svg><span style="left:18.5px;top:4px">T27-tut2-ini : 1</span><i class="x" style="left:89px"></i></div>
</body></html>
